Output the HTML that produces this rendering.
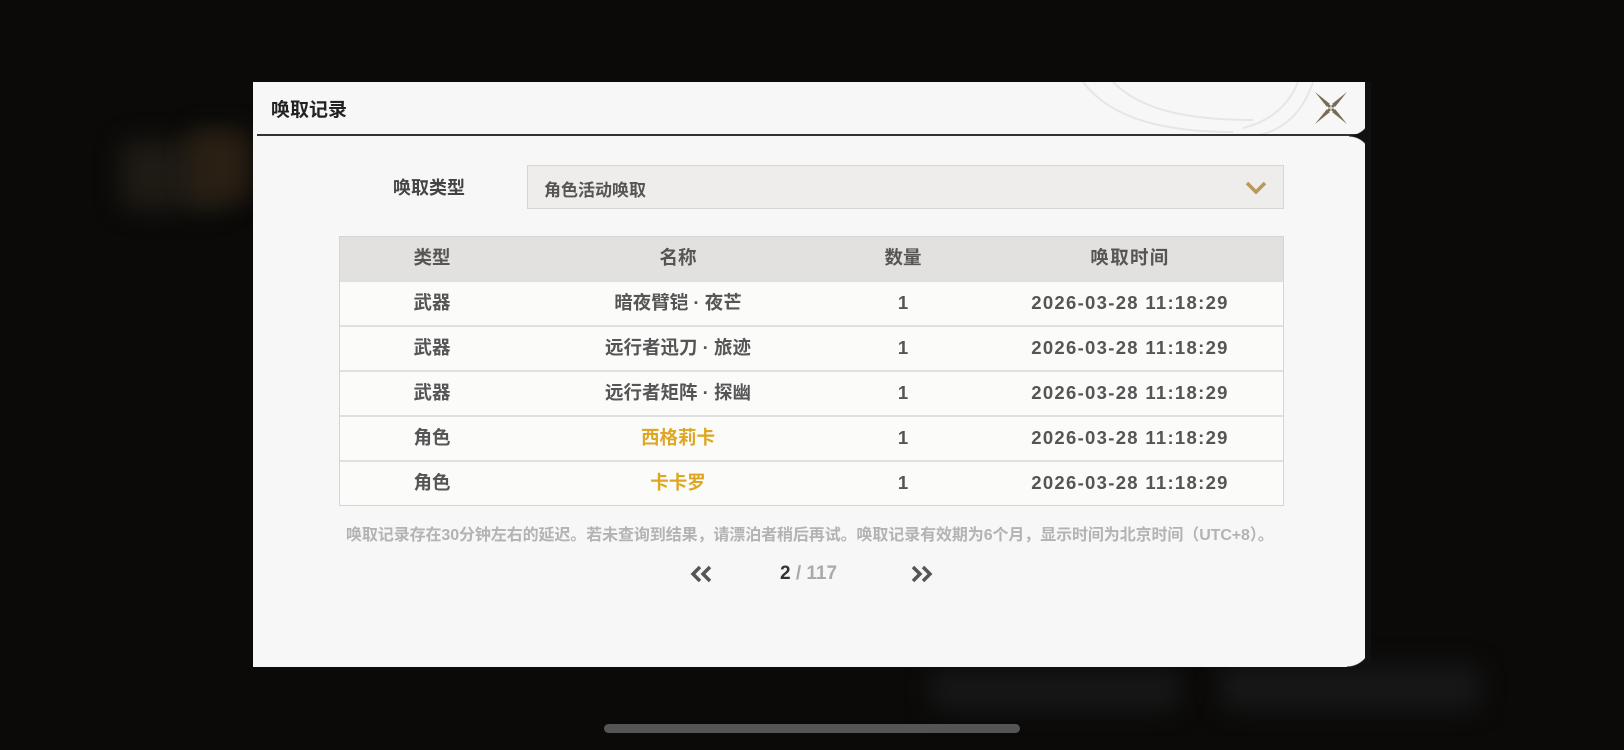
<!DOCTYPE html>
<html><head><meta charset="utf-8"><style>
*{margin:0;padding:0;box-sizing:border-box}
body{width:1624px;height:750px;overflow:hidden;background:#0b0a09;font-family:"Liberation Sans","Noto Sans CJK SC",sans-serif;position:relative}
.blob{position:absolute;border-radius:12px;filter:blur(12px)}
.dlg{position:absolute;left:253px;top:82px;width:1118px;height:585px;background:#f6f7f6;overflow:hidden}
.strip{position:absolute;right:0;top:0;width:6px;height:100%;background:#111}
.title{position:absolute;left:18px;top:13px;font-size:19px;font-weight:bold;color:#222}
.hline{position:absolute;left:4px;right:0;top:52px;height:2px;background:#333}
.lbl{position:absolute;left:140px;top:92px;font-size:18px;font-weight:bold;color:#444}
.dd{position:absolute;left:274px;top:83px;width:757px;height:44px;background:#eeedeb;border:1px solid #d8d6d3;font-size:17px;font-weight:bold;color:#555;padding:10px 16px}
.tbl{position:absolute;left:86px;top:154px;width:945px;border:1px solid #d4d4d4}
.row{position:relative;height:45px;background:#fbfbfa;border-top:2px solid #e0e0e0}
.row.h{background:#e3e1df;height:43px;border-top:none}
.c{position:absolute;top:0;height:100%;display:flex;align-items:center;transform:translateX(-50%);white-space:nowrap;font-size:18.5px;font-weight:bold;color:#555;line-height:1}
.c1{left:92px}.c2{left:338px}.c3{left:563px}.c4{left:790px;letter-spacing:1.3px}
.g{color:#dea722}
.note{position:absolute;left:93px;top:439px;font-size:16px;color:#b3b3b3;font-weight:bold;white-space:nowrap;letter-spacing:-0.1px}
</style></head><body>
<div class="blob" style="left:120px;top:140px;width:110px;height:70px;background:#1e1a14"></div>
<div class="blob" style="left:190px;top:130px;width:60px;height:70px;background:#2a2014"></div>
<div class="blob" style="left:930px;top:670px;width:250px;height:40px;background:#171717"></div>
<div class="blob" style="left:1220px;top:665px;width:260px;height:45px;background:#171717"></div>
<div style="position:absolute;left:1369px;top:82px;width:2px;height:585px;background:#ddd"></div>
<div class="dlg">
 <svg style="position:absolute;left:800px;top:0" width="318" height="54"><g fill="none" stroke="#e6e6e6" stroke-width="2"><path d="M260 0 C250 30 230 50 200 54"/><path d="M245 0 C235 25 215 40 190 46"/><path d="M30 0 C60 40 120 50 180 50"/><path d="M60 0 C90 30 140 38 200 38"/></g></svg>
 <div class="strip"></div>
 <div class="title">唤取记录</div>
 <svg style="position:absolute;left:1060px;top:8px" width="36" height="36" viewBox="0 0 36 36"><path d="M2 2 L17 14 L14 17 Z M34 2 L22 17 L19 14 Z M2 34 L14 19 L17 22 Z M34 34 L19 22 L22 19 Z" fill="#776c55"/><rect x="15" y="15" width="2.5" height="2.5" fill="#776c55"/><rect x="18.5" y="15" width="2.5" height="2.5" fill="#776c55"/><rect x="15" y="18.5" width="2.5" height="2.5" fill="#776c55"/><rect x="18.5" y="18.5" width="2.5" height="2.5" fill="#776c55"/></svg>
 <div class="hline"></div>
 <div style="position:absolute;right:0;top:54px;width:22px;height:22px;background:radial-gradient(circle at 0 100%,transparent 21px,#111 22px)"></div>
 <div style="position:absolute;right:0;top:32px;width:22px;height:22px;background:radial-gradient(circle at 0 0,transparent 21px,#111 22px)"></div>
 <div style="position:absolute;right:0;bottom:0;width:24px;height:24px;background:radial-gradient(circle at 0 0,transparent 23px,#111 24px)"></div>
 <div class="lbl">唤取类型</div>
 <div class="dd">角色活动唤取
  <svg style="position:absolute;right:16px;top:15px" width="22" height="14" viewBox="0 0 22 14"><path d="M2 2 L11 11 L20 2" fill="none" stroke="#b89a5a" stroke-width="3.5"/></svg></div>
 <div class="tbl">
  <div class="row h"><span class="c c1">类型</span><span class="c c2">名称</span><span class="c c3">数量</span><span class="c c4">唤取时间</span></div>
  <div class="row"><span class="c c1">武器</span><span class="c c2">暗夜臂铠 · 夜芒</span><span class="c c3">1</span><span class="c c4">2026-03-28 11:18:29</span></div>
  <div class="row"><span class="c c1">武器</span><span class="c c2">远行者迅刀 · 旅迹</span><span class="c c3">1</span><span class="c c4">2026-03-28 11:18:29</span></div>
  <div class="row"><span class="c c1">武器</span><span class="c c2">远行者矩阵 · 探幽</span><span class="c c3">1</span><span class="c c4">2026-03-28 11:18:29</span></div>
  <div class="row"><span class="c c1">角色</span><span class="c c2 g">西格莉卡</span><span class="c c3">1</span><span class="c c4">2026-03-28 11:18:29</span></div>
  <div class="row"><span class="c c1">角色</span><span class="c c2 g">卡卡罗</span><span class="c c3">1</span><span class="c c4">2026-03-28 11:18:29</span></div>
 </div>
 <div class="note">唤取记录存在30分钟左右的延迟。若未查询到结果，请漂泊者稍后再试。唤取记录有效期为6个月，显示时间为北京时间（UTC+8）。</div>
 <svg style="position:absolute;left:437px;top:483px" width="24" height="18" viewBox="0 0 24 18"><path d="M10 2 L3 9 L10 16 M20 2 L13 9 L20 16" fill="none" stroke="#555" stroke-width="3.5"/></svg>
 <div style="position:absolute;left:527px;top:481px;font-size:19px;font-weight:bold;color:#333">2<span style="color:#aaa"> / 117</span></div>
 <svg style="position:absolute;left:656px;top:483px" width="24" height="18" viewBox="0 0 24 18"><path d="M4 2 L11 9 L4 16 M14 2 L21 9 L14 16" fill="none" stroke="#555" stroke-width="3.5"/></svg>
</div>
<div style="position:absolute;left:604px;top:724px;width:416px;height:9px;border-radius:5px;background:#555"></div>
</body></html>
